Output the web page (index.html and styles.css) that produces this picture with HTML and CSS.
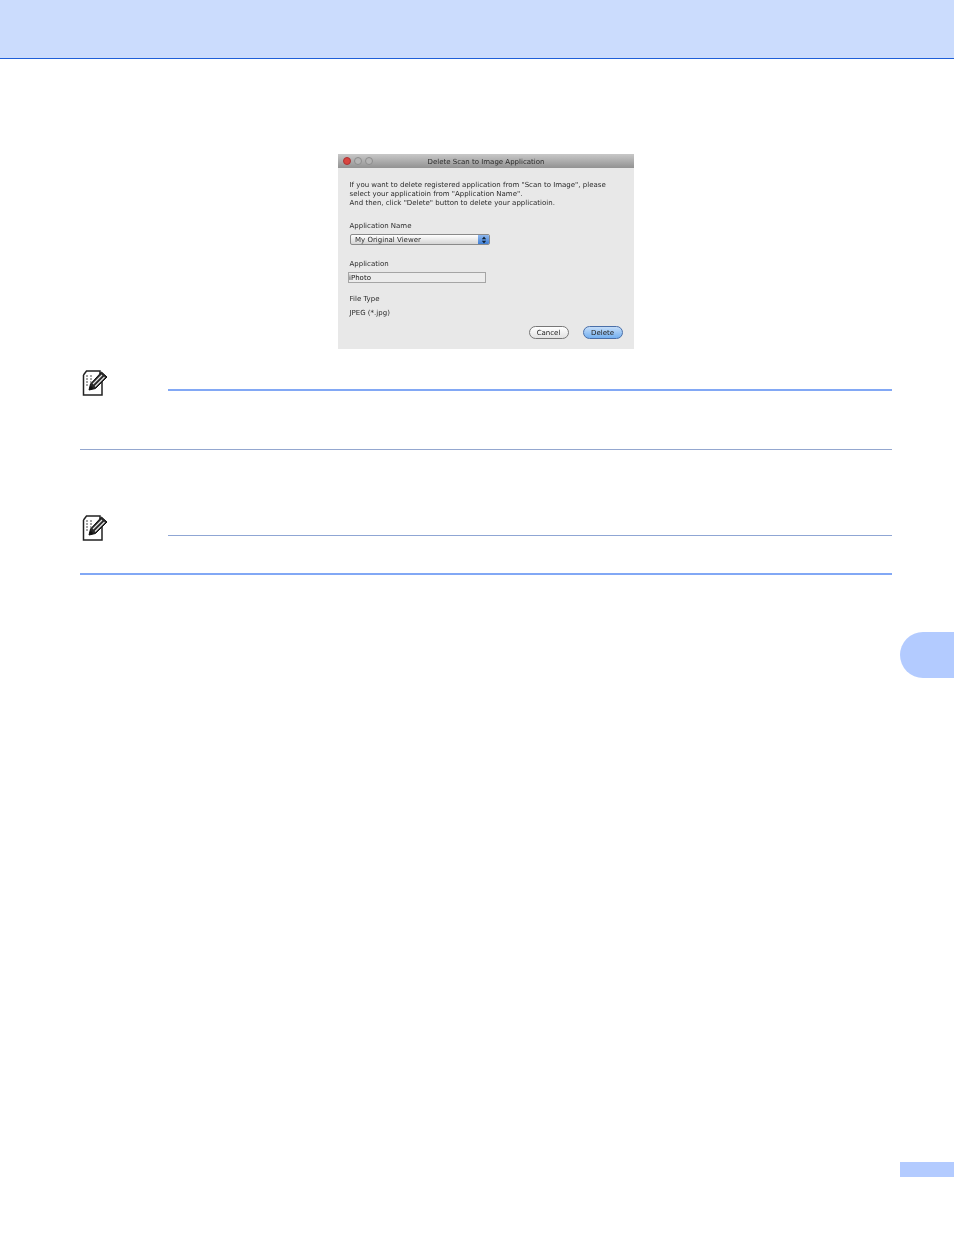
FILE: index.html
```html
<!DOCTYPE html>
<html lang="en">
<head>
    <meta charset="UTF-8">
    <meta name="viewport" content="width=device-width, initial-scale=1.0">
    <title>Delete Scan to Image Application</title>
    <link rel="stylesheet" href="styles.css">
</head>
<body>
    <header class="top-bar"></header>

    <main class="page">
        <div class="dialog">
            <div class="title-bar">
                <div class="lights">
                    <span class="light light-close"></span>
                    <span class="light"></span>
                    <span class="light"></span>
                </div>
                <span class="title-text">Delete Scan to Image Application</span>
            </div>
            <div class="dialog-body">
                <p class="intro">If you want to delete registered application from "Scan to Image", please<br>select your applicatioin from "Application Name".<br>And then, click "Delete" button to delete your applicatioin.</p>
                <div class="label label-name">Application Name</div>
                <div class="select">
                    <span class="select-text">My Original Viewer</span>
                    <span class="select-arrows">
                        <svg width="6" height="8" viewBox="0 0 6 8"><path d="M3 0.5 L5.2 3.2 H0.8 Z M3 7.5 L5.2 4.8 H0.8 Z" fill="#123"/></svg>
                    </span>
                </div>
                <div class="label label-app">Application</div>
                <div class="text-field">iPhoto</div>
                <div class="label label-type">File Type</div>
                <div class="label label-value">JPEG (*.jpg)</div>
                <div class="dialog-actions">
                    <button class="btn">Cancel</button>
                    <button class="btn btn-primary">Delete</button>
                </div>
            </div>
        </div>

        <section class="note note-first">
            <div class="note-head">
                <svg class="note-icon" width="26" height="26" viewBox="0 0 26 26">
                    <path d="M1.500 5 L4.500 1 H18 V4 M20 11 V25 H1.500 V5" fill="#fff" stroke="#222" stroke-width="1.500"/>
                    <path d="M4 6 H6 M8 6 H10 M4 9 H6 M8 9 H10 M4 12 H6 M8 12 H9.500 M4 15 H6" stroke="#888" stroke-width="1.600"/>
                    <path d="M7 20 L8.500 14 L19.500 2 L25 7 L13.500 18.500 Z" fill="#2a2a2a" stroke="#111" stroke-width="1"/>
                    <path d="M11 14 L20 5 M13 16.500 L22.500 7" stroke="#e4e4e4" stroke-width="1.200"/>
                    <path d="M7 20 L8.500 15.500 L11.500 18.500 Z" fill="#111"/>
                </svg>
                <div class="note-line note-line-thick"></div>
            </div>
        </section>

        <section class="note note-second">
            <div class="note-head">
                <svg class="note-icon" width="26" height="26" viewBox="0 0 26 26">
                    <path d="M1.500 5 L4.500 1 H18 V4 M20 11 V25 H1.500 V5" fill="#fff" stroke="#222" stroke-width="1.500"/>
                    <path d="M4 6 H6 M8 6 H10 M4 9 H6 M8 9 H10 M4 12 H6 M8 12 H9.500 M4 15 H6" stroke="#888" stroke-width="1.600"/>
                    <path d="M7 20 L8.500 14 L19.500 2 L25 7 L13.500 18.500 Z" fill="#2a2a2a" stroke="#111" stroke-width="1"/>
                    <path d="M11 14 L20 5 M13 16.500 L22.500 7" stroke="#e4e4e4" stroke-width="1.200"/>
                    <path d="M7 20 L8.500 15.500 L11.500 18.500 Z" fill="#111"/>
                </svg>
                <div class="note-line"></div>
            </div>
        </section>
    </main>

    <div class="chapter-tab"></div>
    <div class="page-tab"></div>
</body>
</html>
```

FILE: styles.css
```css
:root {
    --tab-blue: #b3cbff;
    --line-blue: #82a8f5;
    --dialog-text: #2a2a2a;
}

html, body {
    margin: 0;
    height: 1235px;
    overflow: hidden;
    background-color: white;
}

body {
    font-family: "DejaVu Sans", sans-serif;
    position: relative;
}

.top-bar {
    height: 58px;
    background-color: #cbdcfd;
    border-bottom: 1px solid #1f5fd8;
}

.page {
    padding: 95px 62px 0 80px;
}

/* dialog screenshot */
.dialog {
    width: 296px;
    height: 195px;
    margin-left: 258px;
    background-color: #e8e8e8;
    color: var(--dialog-text);
    font-size: 7px;
    filter: blur(0.4px);
}

.title-bar {
    height: 14px;
    display: flex;
    align-items: center;
    position: relative;
    background: linear-gradient(#c8c8c8, #929292);
}

.lights {
    display: flex;
    gap: 3px;
    margin-left: 5px;
}

.light {
    width: 8px;
    height: 8px;
    border-radius: 50%;
    background-color: #b4b4b4;
    border: 0.5px solid #8c8c8c;
    box-sizing: border-box;
}

.light-close {
    background-color: #d9443f;
    border-color: #a33;
}

.title-text {
    position: absolute;
    left: 0;
    right: 0;
    padding-top: 1px;
    text-align: center;
    color: #2b2b2b;
    font-size: 7px;
}

.dialog-body {
    padding: 13px 0 0 11.500px;
}

.intro {
    margin: 0;
    line-height: 9px;
}

.label {
    line-height: 9px;
}

.label-name {
    margin-top: 14px;
}

.select {
    box-sizing: border-box;
    width: 140px;
    height: 11px;
    margin: 3px 0 0 0.500px;
    display: flex;
    justify-content: space-between;
    background: linear-gradient(#fff, #d5d5d5);
    border: 0.5px solid #8a8a8a;
    border-radius: 2px;
    line-height: 11px;
    overflow: hidden;
}

.select-text {
    padding-left: 4px;
}

.select-arrows {
    width: 11px;
    display: flex;
    align-items: center;
    justify-content: center;
    background: linear-gradient(#8fb8ee, #3f7fd6);
}

.label-app {
    margin-top: 15px;
}

.text-field {
    width: 136px;
    height: 9px;
    margin: 3px 0 0 -1.500px;
    background-color: #ececec;
    border: 1px solid #a5a5a5;
    line-height: 10px;
    color: #111;
}

.label-type {
    margin-top: 12px;
}

.label-value {
    margin-top: 5px;
}

.dialog-actions {
    display: flex;
    justify-content: flex-end;
    gap: 14px;
    margin: 8px 11.500px 0 0;
}

.btn {
    width: 40px;
    height: 13px;
    padding: 0;
    font-family: inherit;
    font-size: 7px;
    line-height: 12px;
    color: #222;
    background: linear-gradient(#fff, #e2e2e2);
    border: 1px solid #777;
    border-radius: 7px;
}

.btn-primary {
    background: linear-gradient(#c4ddf9, #74b0f0);
    border-color: #4a6fa8;
}

/* note blocks */
.note {
    box-sizing: border-box;
    width: 812px;
}

.note-first {
    height: 80px;
    margin-top: 21px;
    border-bottom: 1px solid #94a7cf;
}

.note-second {
    height: 60px;
    margin-top: 65px;
    border-bottom: 2px solid var(--line-blue);
}

.note-head {
    display: flex;
    align-items: flex-start;
}

.note-icon {
    margin-left: 2px;
    width: 26px;
    flex-shrink: 0;
}

.note-line {
    flex: 1;
    margin: 20px 0 0 60px;
    height: 1px;
    background-color: #8fa6d4;
}

.note-line-thick {
    margin-top: 19px;
    height: 2px;
    background-color: var(--line-blue);
}

/* tabs on the page edge */
.chapter-tab {
    position: absolute;
    right: 0;
    top: 632px;
    width: 54px;
    height: 46px;
    background-color: var(--tab-blue);
    border-radius: 23px 0 0 23px;
}

.page-tab {
    position: absolute;
    right: 0;
    top: 1162px;
    width: 54px;
    height: 15px;
    background-color: var(--tab-blue);
}
```
